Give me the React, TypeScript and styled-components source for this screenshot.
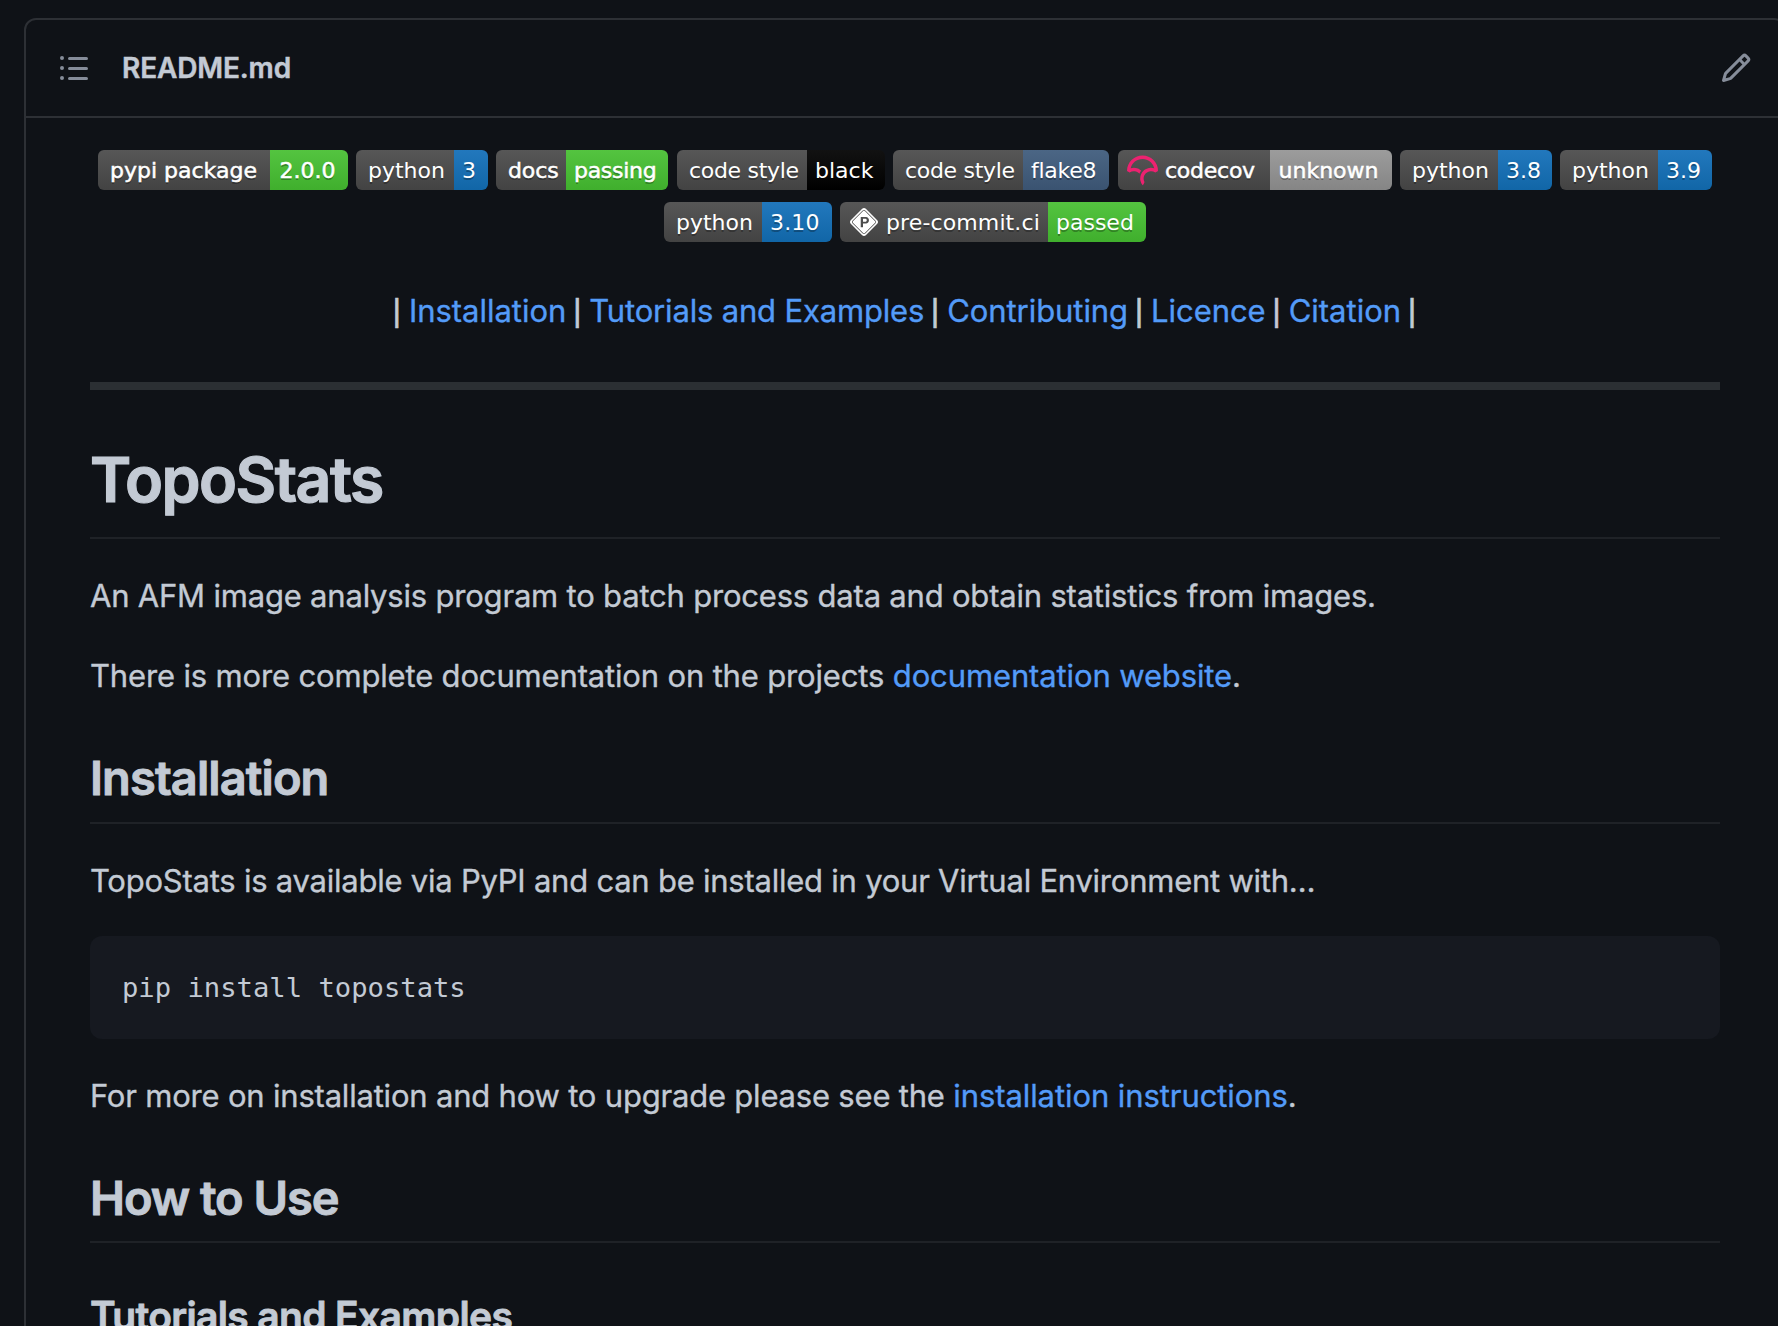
import React from "react";
import styled, { createGlobalStyle } from "styled-components";
import { SiCodecov, SiPrecommit } from "react-icons/si";

const color = {
  canvas: "#0f1217",
  text: "#c3cad4",
  muted: "#868d9a",
  link: "#539bf8",
  border: "#2d3035",
  rule: "#2b2f33",
  headingBorder: "#1f2227",
  codeBg: "#161920",
};

const GlobalStyle = createGlobalStyle`
  html, body {
    margin: 0;
    background: ${color.canvas};
    overflow: hidden;
  }
`;

const Page = styled.div`
  box-sizing: border-box;
  height: 1326px;
  padding: 18px 0 0 24px;
  overflow: hidden;
  color: ${color.text};
  font-family: Inter, "Liberation Sans", sans-serif;
`;

const ReadmeBox = styled.article`
  box-sizing: border-box;
  width: 1762px;
  border: 2px solid ${color.border};
  border-radius: 12px;
`;

const Header = styled.header`
  display: flex;
  align-items: center;
  gap: 32px;
  box-sizing: border-box;
  height: 98px;
  padding: 0 32px;
  border-bottom: 2px solid ${color.border};
`;

const HeaderIcon = styled.svg`
  width: 32px;
  height: 32px;
  fill: ${color.muted};
`;

const FileName = styled.h2`
  flex: 1;
  margin: 0;
  font-size: 28px;
  font-weight: 600;
  line-height: 42px;
  letter-spacing: -0.13px;
  -webkit-text-stroke: 0.5px;
`;

const Content = styled.div`
  padding: 32px 64px;
`;

const Badges = styled.div`
  display: flex;
  flex-wrap: wrap;
  justify-content: center;
  gap: 12px 8px;
  margin-bottom: 32px;
  padding-bottom: 12px;
`;

const Badge = styled.a`
  display: flex;
  height: 40px;
  border-radius: 6px;
  overflow: hidden;
  color: #fff;
  font: 22px/42px "DejaVu Sans", Verdana, sans-serif;
  font-variant-ligatures: none;
  text-shadow: 0 2px 0 rgba(1, 1, 1, 0.3);
  white-space: pre;

  &:nth-child(4),
  &:nth-child(6) {
    margin-left: 1px;
  }
`;

type Tone = "green" | "blue" | "black" | "slate" | "grey";

const tones: Record<Tone, [string, string]> = {
  green: ["#54c440", "#40af2d"],
  blue: ["#2278bd", "#1166a7"],
  black: ["#121212", "#000000"],
  slate: ["#4b6685", "#3a5371"],
  grey: ["#9c9c9c", "#858585"],
};

interface PartProps {
  $width: number;
  $strong?: boolean;
  $tracking?: number;
}

const BadgePart = styled.span<PartProps>`
  display: flex;
  box-sizing: border-box;
  width: ${(p) => p.$width}px;
  letter-spacing: ${(p) => p.$tracking ?? 0}px;
  -webkit-text-stroke: ${(p) => (p.$strong ? "0.5px #fff" : "0")};
`;

const BadgeLabel = styled(BadgePart)`
  padding-left: 12px;
  background: linear-gradient(#575757, #434343);
`;

const BadgeValue = styled(BadgePart)<{ $tone: Tone; $pad?: number }>`
  padding-left: ${(p) => p.$pad ?? 8}px;
  background: linear-gradient(${(p) => tones[p.$tone].join(", ")});
`;

const CodecovLogo = styled(SiCodecov)`
  width: 31px;
  height: 31px;
  margin: 4.5px 7px 0 -3px;
  color: #ec2270;
`;

const PrecommitLogo = styled(SiPrecommit)`
  width: 28px;
  height: 28px;
  margin: 6px 8px 0 -2px;
`;

const Nav = styled.nav`
  display: flex;
  justify-content: center;
  gap: 7.5px;
  height: 48px;
  margin-bottom: 48px;
  font-size: 31px;
  line-height: 50px;
`;

const Separator = styled.span`
  width: 8px;
  font-family: "Liberation Sans", Arial, sans-serif;
  text-indent: -0.6px;
  -webkit-text-stroke: 0.7px;
`;

const Link = styled.a<{ $tracking?: number }>`
  color: ${color.link};
  letter-spacing: ${(p) => p.$tracking ?? 0}px;
  -webkit-text-stroke: 0.35px;
`;

const Rule = styled.hr`
  height: 8px;
  margin: 0 0 48px;
  border: 0;
  background: ${color.rule};
`;

const Title = styled.h1`
  height: 80px;
  margin: 0 0 32px;
  padding-bottom: 19.2px;
  border-bottom: 2px solid ${color.headingBorder};
  font-size: 62.5px;
  font-weight: 600;
  line-height: 82px;
  letter-spacing: -1.5px;
  -webkit-text-stroke: 1.2px;
`;

const SectionTitle = styled.h2<{ $tracking: number }>`
  height: 60px;
  margin: 48px 0 32px;
  padding-bottom: 14.4px;
  border-bottom: 2px solid ${color.headingBorder};
  font-size: 47px;
  font-weight: 600;
  line-height: 62px;
  letter-spacing: ${(p) => p.$tracking}px;
  -webkit-text-stroke: 0.9px;
`;

const SubsectionTitle = styled.h3`
  margin: 48px 0 32px;
  font-size: 39px;
  font-weight: 600;
  line-height: 50px;
  letter-spacing: -0.65px;
  -webkit-text-stroke: 0.8px;
`;

const Paragraph = styled.p<{ $tracking: number }>`
  height: 48px;
  margin: 0 0 32px;
  font-size: 31px;
  line-height: 50px;
  letter-spacing: ${(p) => p.$tracking}px;
  white-space: nowrap;
  -webkit-text-stroke: 0.35px;
`;

const CodeBlock = styled.pre`
  margin: 0 0 32px;
  padding: 32px;
  border-radius: 12px;
  background: ${color.codeBg};
  font: 27.2px/39.44px "DejaVu Sans Mono", Menlo, monospace;
`;

interface BadgeText {
  text: string;
  width: number;
  tracking?: number;
}

interface BadgeData {
  label: BadgeText;
  value: BadgeText & { pad?: number };
  tone: Tone;
  strong?: boolean;
  logo?: React.ReactNode;
}

const python: BadgeText = { text: "python", width: 98 };
const codeStyle: BadgeText = { text: "code style", width: 130, tracking: -0.3 };

const badges: BadgeData[] = [
  { label: { text: "pypi package", width: 172 }, value: { text: "2.0.0", width: 78, pad: 9.5 }, tone: "green", strong: true },
  { label: python, value: { text: "3", width: 34 }, tone: "blue" },
  { label: { text: "docs", width: 70, tracking: -0.1 }, value: { text: "passing", width: 102, tracking: -0.3 }, tone: "green", strong: true },
  { label: codeStyle, value: { text: "black", width: 78 }, tone: "black" },
  { label: codeStyle, value: { text: "flake8", width: 86, tracking: -0.25 }, tone: "slate" },
  {
    label: { text: "codecov", width: 152, tracking: -0.25 },
    value: { text: "unknown", width: 122, pad: 8.5 },
    tone: "grey",
    strong: true,
    logo: <CodecovLogo />,
  },
  { label: python, value: { text: "3.8", width: 54 }, tone: "blue" },
  { label: python, value: { text: "3.9", width: 54 }, tone: "blue" },
  { label: python, value: { text: "3.10", width: 70, tracking: 0.15 }, tone: "blue" },
  {
    label: { text: "pre-commit.ci", width: 208, tracking: 0.12 },
    value: { text: "passed", width: 98 },
    tone: "green",
    logo: <PrecommitLogo />,
  },
];

const sections = [
  { name: "Installation", tracking: -0.03 },
  { name: "Tutorials and Examples", tracking: -0.17 },
  { name: "Contributing", tracking: -0.06 },
  { name: "Licence", tracking: -0.05 },
  { name: "Citation", tracking: 0 },
];

const ListIcon = () => (
  <HeaderIcon viewBox="0 0 16 16">
    <path d="M2 4a1 1 0 100-2 1 1 0 000 2zm3.75-1.5a.75.75 0 000 1.5h8.5a.75.75 0 000-1.5h-8.5zm0 5a.75.75 0 000 1.5h8.5a.75.75 0 000-1.5h-8.5zm0 5a.75.75 0 000 1.5h8.5a.75.75 0 000-1.5h-8.5zM3 8a1 1 0 11-2 0 1 1 0 012 0zm-1 6a1 1 0 100-2 1 1 0 000 2z" />
  </HeaderIcon>
);

const PencilIcon = () => (
  <HeaderIcon viewBox="0 0 16 16">
    <path d="M11.013 1.427a1.75 1.75 0 012.474 0l1.086 1.086a1.75 1.75 0 010 2.474l-8.61 8.61c-.21.21-.47.364-.756.445l-3.251.93a.75.75 0 01-.927-.928l.929-3.25a1.75 1.75 0 01.445-.758l8.61-8.61zm1.414 1.06a.25.25 0 00-.354 0L10.811 3.75l1.439 1.44 1.263-1.263a.25.25 0 000-.354l-1.086-1.086zM11.189 6.25L9.75 4.81l-6.286 6.287a.25.25 0 00-.064.108l-.558 1.953 1.953-.558a.249.249 0 00.108-.064l6.286-6.286z" />
  </HeaderIcon>
);

export default function App() {
  return (
    <Page>
      <GlobalStyle />
      <ReadmeBox>
        <Header>
          <ListIcon />
          <FileName>README.md</FileName>
          <PencilIcon />
        </Header>
        <Content>
          <Badges>
            {badges.map(({ label, value, tone, strong, logo }) => (
              <Badge key={label.text + value.text}>
                <BadgeLabel $width={label.width} $tracking={label.tracking} $strong={strong}>
                  {logo}
                  {label.text}
                </BadgeLabel>
                <BadgeValue
                  $width={value.width}
                  $tracking={value.tracking}
                  $pad={value.pad}
                  $tone={tone}
                  $strong={strong}
                >
                  {value.text}
                </BadgeValue>
              </Badge>
            ))}
          </Badges>
          <Nav>
            <Separator>|</Separator>
            {sections.map((s) => (
              <React.Fragment key={s.name}>
                <Link $tracking={s.tracking}>{s.name}</Link>
                <Separator>|</Separator>
              </React.Fragment>
            ))}
          </Nav>
          <Rule />
          <Title>TopoStats</Title>
          <Paragraph $tracking={-0.2}>
            An AFM image analysis program to batch process data and obtain statistics from images.
          </Paragraph>
          <Paragraph $tracking={-0.16}>
            There is more complete documentation on the projects{" "}
            <Link $tracking={-0.12}>documentation website</Link>.
          </Paragraph>
          <SectionTitle $tracking={-0.9}>Installation</SectionTitle>
          <Paragraph $tracking={-0.235}>
            TopoStats is available via PyPI and can be installed in your Virtual Environment with…
          </Paragraph>
          <CodeBlock>pip install topostats</CodeBlock>
          <Paragraph $tracking={-0.2}>
            For more on installation and how to upgrade please see the{" "}
            <Link $tracking={-0.08}>installation instructions</Link>.
          </Paragraph>
          <SectionTitle $tracking={-1.05}>How to Use</SectionTitle>
          <SubsectionTitle>Tutorials and Examples</SubsectionTitle>
        </Content>
      </ReadmeBox>
    </Page>
  );
}
